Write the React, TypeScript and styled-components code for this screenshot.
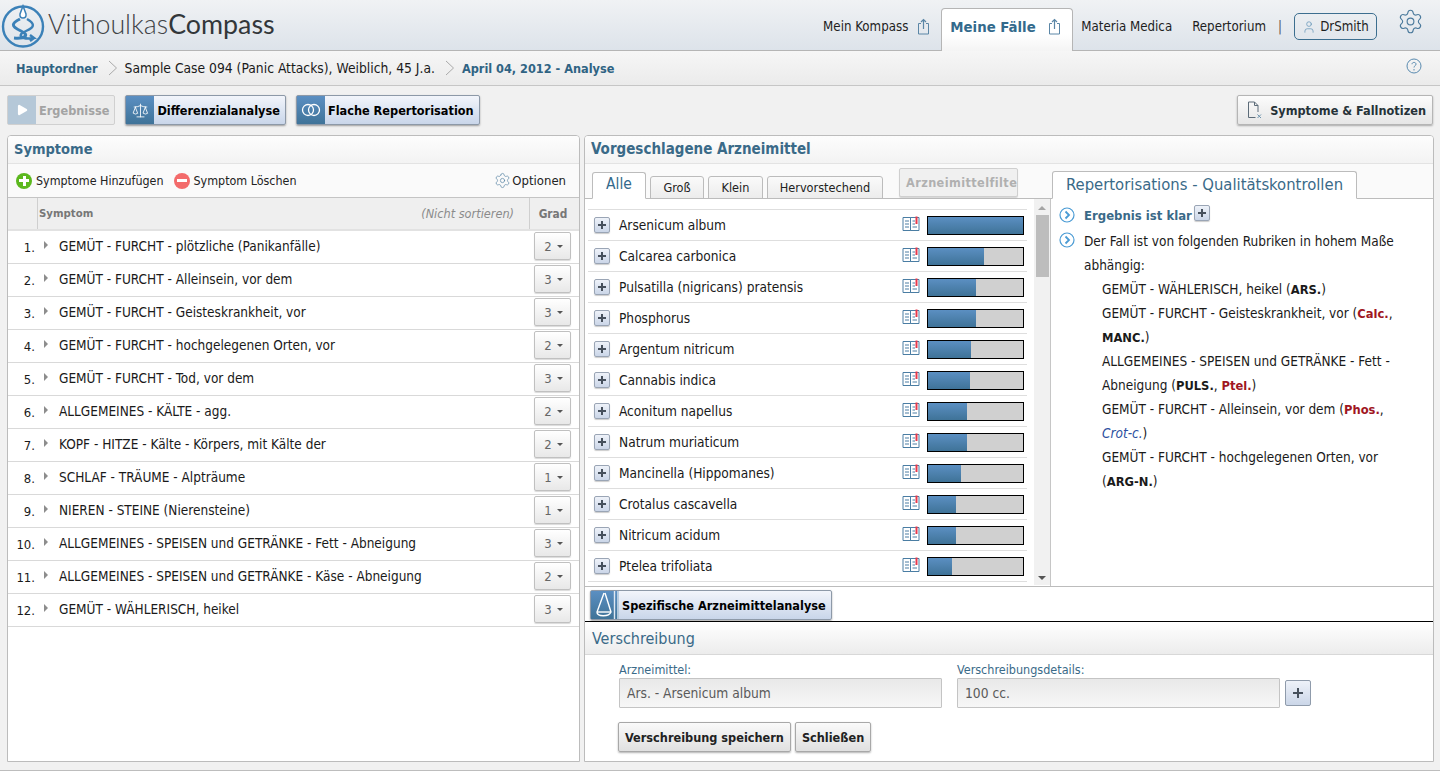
import React from "react";
import styled, { createGlobalStyle } from "styled-components";
import { Settings, Scale, User, Play } from "lucide-react";

const Global = createGlobalStyle`
  html, body { margin: 0; padding: 0; height: 100%; overflow: hidden; }
  body { font-family: "DejaVu Sans", "Noto Sans", sans-serif; font-stretch: condensed; font-size: 13.6px; color: #1a1a1a; background: #f1f1f1; }
  * { box-sizing: border-box; }
`;

const Page = styled.div`width: 1440px; height: 771px; display: flex; flex-direction: column; overflow: hidden; border-bottom: 1px solid #bdbdbd;`;
const Header = styled.header`height: 51px; flex: none; display: flex; align-items: flex-start; justify-content: space-between; padding: 0 16px 0 0; background: linear-gradient(#f0f2f4, #dde3ea); border-bottom: 1px solid #b5b5b5;`;
const Brand = styled.div`display: flex; align-items: center; gap: 2px; height: 50px;`;
const BrandText = styled.div`font-family: "Lato", sans-serif; font-stretch: normal; font-size: 26.8px; font-weight: 300; color: #3f4347; padding-bottom: 2px; b { font-weight: 400; color: #33373a; }`;
const Nav = styled.nav`display: flex; align-items: flex-start; height: 50px; font-size: 13.2px;`;
const NavItem = styled.div<{ $gap?: number }>`display: flex; align-items: center; gap: 9px; height: 50px; padding: 2px 0 0; margin-right: ${p => p.$gap ?? 18}px; color: #1e1e1e; white-space: nowrap;`;
const ActiveTab = styled.div`display: flex; align-items: center; gap: 12px; width: 132px; height: 43px; margin: 8px 8px 0 0; padding: 0 0 8px 8px; background: linear-gradient(#fff 60%, #f4f4f4); border: 1px solid #b5b5b5; border-bottom: 0; border-radius: 4px 4px 0 0; color: #336a8c; font-weight: 700; font-size: 14.8px; white-space: nowrap;`;
const NavSep = styled.span`margin: 0 12px 0 -6px; line-height: 50px; padding-top: 2px; height: 50px; color: #555;`;
const UserBtn = styled.div`display: flex; align-items: center; justify-content: center; gap: 4px; width: 83px; height: 27px; margin-top: 13px; border: 1px solid #3c6e8f; border-radius: 5px; color: #1e1e1e;`;
const Gear = styled.div`margin: 8px 0 0 20px; color: #4b7a9c; line-height: 0;`;

const Crumbs = styled.div`height: 35px; flex: none; display: flex; align-items: center; padding: 0 18px 0 16px; background: linear-gradient(#f6f6f6, #ebebeb); border-bottom: 1px solid #c6c6c6; white-space: nowrap;`;
const CrumbLink = styled.span`color: #2f6383; font-weight: 700; font-size: 12.6px;`;
const CrumbText = styled.span`font-size: 13.75px;`;
const Chevron = styled.span`display: inline-flex; margin: 0 7px 0 10px; color: #aaa; line-height: 0;`;
const Help = styled.span`margin-left: auto; color: #5a8bb0; line-height: 0; position: relative; top: -2px;`;

const Actions = styled.div`height: 49px; flex: none; display: flex; align-items: center; padding: 0 7px 1px 7px; gap: 10px; background: #f1f1f1; font-size: 12.6px;`;
const IconBtn = styled.div<{ $off?: boolean }>`display: flex; align-items: stretch; height: 30px; border: 1px solid ${p => (p.$off ? "#d0d0d0" : "#8d99a8")}; border-radius: 2px; box-shadow: ${p => (p.$off ? "none" : "0 1px 2px rgba(0,0,0,.35)")}; background: ${p => (p.$off ? "#ececec" : "linear-gradient(#f2f5fb, #c9d6ea)")}; font-weight: 700; font-size: 12.6px; color: ${p => (p.$off ? "#a3a3a3" : "#000")}; white-space: nowrap;`;
const BtnIcon = styled.span<{ $off?: boolean }>`width: 28px; display: flex; align-items: center; justify-content: center; color: #fff; background: ${p => (p.$off ? "#b5c8d8" : "linear-gradient(#5b8fc2, #3f7398)")};`;
const BtnText = styled.span`display: flex; align-items: center; padding: 0 5px 0 3px;`;
const PlainBtn = styled.div`display: flex; align-items: center; gap: 8px; margin-left: auto; height: 30px; padding: 0 6px 0 9px; border: 1px solid #b5b5b5; border-radius: 2px; background: linear-gradient(#fcfcfc, #e6e6e6); box-shadow: 0 1px 2px rgba(0,0,0,.3); font-weight: 700; color: #263238; white-space: nowrap;`;

const Main = styled.main`flex: 1; min-height: 0; display: grid; grid-template-columns: 573px 850px; column-gap: 4px; padding: 0 7px 8px 7px;`;
const Panel = styled.section`display: flex; flex-direction: column; min-height: 0; background: #fff; border: 1px solid #bcbcbc; border-radius: 4px 4px 0 0; overflow: hidden;`;
const PanelTitle = styled.h2<{ $size?: number }>`flex: none; height: 28px; margin: 0; padding: 0 6px 2px; display: flex; align-items: center; background: linear-gradient(#fdfdfd, #f3f3f3); border-bottom: 1px solid #e3e3e3; color: #3a6a88; font-size: ${p => p.$size ?? 15}px; font-weight: 700;`;

const SymToolbar = styled.div`flex: none; height: 34px; display: flex; align-items: center; padding: 0 13px 0 8px; gap: 10px; background: #fafafa; border-bottom: 1px solid #c4c4c4; color: #222; font-size: 12.4px;`;
const ToolItem = styled.span`display: inline-flex; align-items: center; gap: 4px; white-space: nowrap;`;
const RoundIcon = styled.span<{ $c: string }>`width: 16px; height: 16px; border-radius: 50%; background: ${p => p.$c}; color: #fff; position: relative; display: inline-block; &::before { content: ""; position: absolute; left: 3px; right: 3px; top: 6.5px; height: 3px; background: #fff; }`;
const RoundPlus = styled(RoundIcon)`&::after { content: ""; position: absolute; top: 3px; bottom: 3px; left: 6.5px; width: 3px; background: #fff; }`;
const OptionItem = styled(ToolItem)`margin-left: auto; gap: 1px; font-size: 13px;`;

const TableHead = styled.div`flex: none; display: grid; grid-template-columns: 29px 1fr 50px; height: 33px; background: #efefef; border-bottom: 2px solid #e2e2e2; color: #777; font-size: 11.3px; font-weight: 700;`;
const HeadCell = styled.div`display: flex; align-items: center; padding: 0 15px 0 1px; border-left: 1px solid #cfcfcf; justify-content: space-between; &:first-child { border-left: 0; }`;
const HeadGrad = styled(HeadCell)`justify-content: center; padding: 0 3px 0 0; font-size: 11.8px;`;
const Hint = styled.i`font-weight: 400; color: #8b8b8b; font-size: 12.6px;`;
const Row = styled.div`flex: none; display: flex; align-items: center; height: 33px; padding: 0 7px 2px 0; border-bottom: 1px solid #d9d9d9; white-space: nowrap; font-size: 13.5px;`;
const RowNum = styled.span`width: 27px; text-align: right; padding-top: 2px; flex: none; font-size: 13px;`;
const Caret = styled.span`flex: none; margin: 0 11px 3px 9px; width: 0; height: 0; border-left: 4px solid #8d8d8d; border-top: 4px solid transparent; border-bottom: 4px solid transparent;`;
const Grade = styled.div`margin-left: auto; display: flex; align-items: center; justify-content: center; gap: 5px; width: 37px; height: 28px; margin-right: 1px; padding-left: 2px; color: #666; font-size: 13px; border: 1px solid #c0c0c0; border-radius: 2px; background: linear-gradient(#fff, #e8e8e8); box-shadow: 0 1px 1px rgba(0,0,0,.15); &::after { content: ""; border-top: 3px solid #555; border-left: 3px solid transparent; border-right: 3px solid transparent; }`;

const TabBar = styled.div`flex: none; height: 35px; display: flex; align-items: flex-end; padding-left: 7px; border-bottom: 1px solid #bcbcbc; background: #fafafa;`;
const Tab = styled.div<{ $w: number; $active?: boolean }>`display: flex; align-items: center; justify-content: center; width: ${p => p.$w}px; height: ${p => (p.$active ? 27 : 23)}px; margin-bottom: -1px; margin-right: 4px; padding-bottom: ${p => (p.$active ? 3 : 0)}px; border: 1px solid #bcbcbc; border-bottom-color: ${p => (p.$active ? "#fff" : "#bcbcbc")}; border-radius: 3px 3px 0 0; background: ${p => (p.$active ? "#fff" : "linear-gradient(#fafafa, #ececec)")}; color: ${p => (p.$active ? "#336a8c" : "#222")}; font-size: ${p => (p.$active ? 15.5 : 12.6)}px; white-space: nowrap;`;
const FilterTab = styled.div`width: 119px; height: 29px; margin: 4px 0 0 12px; align-self: flex-start; overflow: hidden; display: flex; align-items: center; padding-left: 6px; border: 1px solid #cfcfcf; border-radius: 2px; background: #f0f0f0; color: #b0b0b0; font-weight: 700; font-size: 12.6px; letter-spacing: .4px; white-space: nowrap; box-shadow: 0 1px 1px rgba(0,0,0,.15);`;
const RepTab = styled.div`position: absolute; left: 467px; top: 7px; width: 305px; height: 28px; padding-bottom: 1px; display: flex; align-items: center; justify-content: center; background: #fff; border: 1px solid #bcbcbc; border-bottom-color: #fff; border-radius: 3px 3px 0 0; color: #3a6a88; font-size: 16.5px; white-space: nowrap;`;
const TabWrap = styled.div`position: relative; flex: none;`;

const Split = styled.div`flex: none; height: 388px; display: grid; grid-template-columns: 466px 1fr; border-bottom: 1px solid #bcbcbc;`;
const ListCol = styled.div`display: grid; grid-template-columns: 449px 16px; border-right: 1px solid #c6c6c6;`;
const List = styled.div`padding: 10px 7px 0 3px;`;
const Med = styled.div`display: flex; align-items: center; height: 31px; border-top: 1px solid #dedede; &:last-child { border-bottom: 1px solid #dedede; height: 32px; }`;
const PlusBtn = styled.span`flex: none; position: relative; display: inline-block; width: 16px; height: 16px; border: 1px solid #9aa5b5; border-radius: 2px; background: linear-gradient(#eef2f9, #cbd6e8); box-shadow: 0 1px 1px rgba(0,0,0,.2); &::before { content: ""; position: absolute; left: 3px; right: 3px; top: 6px; height: 2px; background: #46505c; } &::after { content: ""; position: absolute; top: 3px; bottom: 3px; left: 6px; width: 2px; background: #46505c; }`;
const MedPlus = styled(PlusBtn)`margin: 0 9px 0 6px;`;
const MedName = styled.span`flex: 1; white-space: nowrap;`;
const BookWrap = styled.span`line-height: 0; margin: -3px 7px 0 0; flex: none;`;
const Bar = styled.div`flex: none; width: 97px; height: 19px; margin-right: 3px; background: #d0d0d0; border: 1px solid #000;`;
const BarFill = styled.div`height: 100%; background: linear-gradient(#5b8fc2, #3f7398);`;
const Scroll = styled.div`background: #f1f1f1; display: flex; flex-direction: column; align-items: center; padding: 7px 0 0; position: relative; margin-bottom: 1px;`;
const ArrowUp = styled.span`border-bottom: 4px solid #a5a5a5; border-left: 4px solid transparent; border-right: 4px solid transparent;`;
const Thumb = styled.div`width: 13px; height: 62px; margin-top: 5px; background: #bdbdbd;`;
const ArrowDown = styled.span`margin-top: auto; margin-bottom: 5px; border-top: 4px solid #555; border-left: 4px solid transparent; border-right: 4px solid transparent;`;

const Quality = styled.div`padding: 5px 17px 0 8px; line-height: 24px; font-size: 13.5px;`;
const QLine = styled.div`display: flex; gap: 9px; align-items: flex-start; & + & { margin-top: 1px; }`;
const QIcon = styled.span`flex: none; line-height: 0; margin-top: 3px; color: #4a9bd4;`;
const QHead = styled.span`color: #3a6a88; font-weight: 700; font-size: 13px; display: inline-flex; align-items: center; gap: 2px;`;
const QPlus = styled(PlusBtn)`margin-top: -6px;`;
const QItem = styled.div`margin-left: 43px;`;
const R = styled.b`color: #a01622; font-size: 12.8px; line-height: 0;`;
const B = styled.b`font-size: 12.8px; line-height: 0;`;
const Cr = styled.i`color: #2c4fa0; line-height: 0;`;

const SpecRow = styled.div`flex: none; height: 35px; padding: 3px 0 0 5px; border-bottom: 1px solid #000;`;
const SpecBtn = styled(IconBtn)`display: inline-flex;`;
const Presc = styled.div`flex: 1; display: flex; flex-direction: column;`;
const PrescTitle = styled(PanelTitle)`height: 33px; padding: 0 6px 0 7px; font-weight: 400; font-size: 16px; background: linear-gradient(#fff, #ececec); border-bottom: 1px solid #d8d8d8;`;
const FormGrid = styled.div`display: grid; grid-template-columns: 323px 323px 26px; column-gap: 15px; padding: 7px 0 0 34px; align-items: end;`;
const Field = styled.label`display: flex; flex-direction: column; color: #3a6a88; font-size: 12.5px; gap: 1px;`;
const Fake = styled.div`height: 30px; display: flex; align-items: center; padding-left: 7px; background: linear-gradient(#e9e9e9, #f7f7f7); border: 1px solid #c4c4c4; border-radius: 1px; color: #5a5a5a; font-size: 13.7px;`;
const AddBtn = styled.div`position: relative; width: 26px; height: 26px; margin: 0 0 2px -10px; border: 1px solid #8f9bab; border-radius: 2px; background: linear-gradient(#eef2f9, #cbd6e8); &::before { content: ""; position: absolute; left: 7px; right: 7px; top: 11px; height: 2px; background: #46505c; } &::after { content: ""; position: absolute; top: 7px; bottom: 7px; left: 11px; width: 2px; background: #46505c; }`;
const FormBtns = styled.div`display: flex; gap: 4px; padding: 14px 0 0 33px;`;
const GrayBtn = styled.div`height: 30px; display: flex; align-items: center; padding: 0 6px; border: 1px solid #a8a8a8; border-radius: 2px; background: linear-gradient(#fafafa, #e0e0e0); box-shadow: 0 1px 2px rgba(0,0,0,.3); color: #222; font-weight: 700; font-size: 12.6px; white-space: nowrap;`;

const Logo = () => (
  <svg width="46" height="46" viewBox="0 0 46 46" fill="none" stroke="#3b81b8">
    <circle cx="23" cy="24.5" r="20" strokeWidth="2.4" />
    <path d="M23 4 L20 12 Q19.5 16 23 16 Q26.5 16 26 12 Z" fill="#fff" strokeWidth="1.5" />
    <path d="M20 17 C12 21 10 24 21 29 C30 33 25 37 14 36" strokeWidth="3" />
    <path d="M27 17 C34 21 36 25 26 29 C16 33 21 38 34 36 L30 33 M34 36 L30 39" strokeWidth="2.4" />
  </svg>
);
const Share = () => (
  <svg width="13" height="17" viewBox="0 0 13 17" fill="none" stroke="#5b86a6" strokeWidth="1">
    <path d="M4 5.5H1.5V16H11.5V5.5H9" />
    <path d="M6.5 11V1.5M4 4L6.5 1.5L9 4" strokeWidth="1.2" />
  </svg>
);
const Book = () => (
  <svg width="18" height="16" viewBox="0 0 18 16" fill="none" stroke="#4a7da3" strokeWidth="1">
    <path d="M1 1.5H8.5V14.5H1ZM8.5 1.5H17V14.5H8.5Z" />
    <path d="M3 5H7M3 8H7M3 11H7M10.5 5H13M10.5 8H13M10.5 11H15" />
    <path d="M14.5 0.5V8" stroke="#e8384a" strokeWidth="2" />
  </svg>
);
const Rings = () => (
  <svg width="20" height="14" viewBox="0 0 20 14" fill="none" stroke="#fff" strokeWidth="1.3"><circle cx="7" cy="7" r="5.5" /><circle cx="13" cy="7" r="5.5" /></svg>
);
const Note = () => (
  <svg width="15" height="18" viewBox="0 0 15 18" fill="none" stroke="#5c6b78" strokeWidth="1">
    <path d="M8.5 16.5H1.5V1H7.5L11 4.5V11M7.5 1V4.5H11" />
    <path d="M10.5 13.5L14 17M14 13.5L10.5 17" stroke="#6d93ad" />
  </svg>
);
const Circle = () => (
  <svg width="16" height="16" viewBox="0 0 16 16" fill="none" stroke="#4a9bd4"><circle cx="8" cy="8" r="7" strokeWidth="1.2" /><path d="M6.5 4.5L10 8L6.5 11.5" strokeWidth="1.8" /></svg>
);
const Cv = () => (
  <svg width="10" height="18" viewBox="0 0 10 18" fill="none" stroke="currentColor"><path d="M1 2L8.5 9L1 16" /></svg>
);
const TallScale = () => (
  <svg width="28" height="30" viewBox="0 0 28 30" fill="none" stroke="#fff" strokeWidth="1.4">
    <path d="M13 3L6 22C6 27 18 27 20 22L14 3" />
    <path d="M6 22H20" />
    <path d="M23.5 1V29M27 1V29" stroke="#dfe8f2" />
  </svg>
);

const symptoms: [string, number][] = [
  ["GEMÜT - FURCHT - plötzliche (Panikanfälle)", 2],
  ["GEMÜT - FURCHT - Alleinsein, vor dem", 3],
  ["GEMÜT - FURCHT - Geisteskrankheit, vor", 3],
  ["GEMÜT - FURCHT - hochgelegenen Orten, vor", 2],
  ["GEMÜT - FURCHT - Tod, vor dem", 3],
  ["ALLGEMEINES - KÄLTE - agg.", 2],
  ["KOPF - HITZE - Kälte - Körpers, mit Kälte der", 2],
  ["SCHLAF - TRÄUME - Alpträume", 1],
  ["NIEREN - STEINE (Nierensteine)", 1],
  ["ALLGEMEINES - SPEISEN und GETRÄNKE - Fett - Abneigung", 3],
  ["ALLGEMEINES - SPEISEN und GETRÄNKE - Käse - Abneigung", 2],
  ["GEMÜT - WÄHLERISCH, heikel", 3],
];
const meds: [string, number][] = [
  ["Arsenicum album", 100],
  ["Calcarea carbonica", 59],
  ["Pulsatilla (nigricans) pratensis", 51],
  ["Phosphorus", 51],
  ["Argentum nitricum", 45],
  ["Cannabis indica", 44],
  ["Aconitum napellus", 41],
  ["Natrum muriaticum", 41],
  ["Mancinella (Hippomanes)", 35],
  ["Crotalus cascavella", 29],
  ["Nitricum acidum", 29],
  ["Ptelea trifoliata", 25],
];

export default function App() {
  return (
    <Page>
      <Global />
      <Header>
        <Brand>
          <Logo />
          <BrandText>Vithoulkas<b>Compass</b></BrandText>
        </Brand>
        <Nav>
          <NavItem $gap={11}>Mein Kompass <Share /></NavItem>
          <ActiveTab>Meine Fälle <Share /></ActiveTab>
          <NavItem $gap={20}>Materia Medica</NavItem>
          <NavItem>Repertorium</NavItem>
          <NavSep>|</NavSep>
          <UserBtn><User size={14} color="#5b8fb5" strokeWidth={1.2} />DrSmith</UserBtn>
          <Gear><Settings size={27} strokeWidth={1} /></Gear>
        </Nav>
      </Header>
      <Crumbs>
        <CrumbLink>Hauptordner</CrumbLink>
        <Chevron><Cv /></Chevron>
        <CrumbText>Sample Case 094 (Panic Attacks), Weiblich, 45 J.a.</CrumbText>
        <Chevron><Cv /></Chevron>
        <CrumbLink>April 04, 2012 - Analyse</CrumbLink>
        <Help>
          <svg width="16" height="16" viewBox="0 0 16 16" fill="none" stroke="currentColor"><circle cx="8" cy="8" r="7" /><path d="M6 6.2C6 3.8 10 3.8 10 6.2C10 7.8 8 7.6 8 9.5M8 11V12.5" /></svg>
        </Help>
      </Crumbs>
      <Actions>
        <IconBtn $off><BtnIcon $off><Play size={14} fill="#fff" strokeWidth={0} /></BtnIcon><BtnText>Ergebnisse</BtnText></IconBtn>
        <IconBtn><BtnIcon><Scale size={17} strokeWidth={1.2} /></BtnIcon><BtnText>Differenzialanalyse</BtnText></IconBtn>
        <IconBtn><BtnIcon><Rings /></BtnIcon><BtnText>Flache Repertorisation</BtnText></IconBtn>
        <PlainBtn><Note />Symptome &amp; Fallnotizen</PlainBtn>
      </Actions>
      <Main>
        <Panel>
          <PanelTitle $size={14.5}>Symptome</PanelTitle>
          <SymToolbar>
            <ToolItem><RoundPlus $c="#5cb81e" />Symptome Hinzufügen</ToolItem>
            <ToolItem><RoundIcon $c="#f36b6b" />Symptom Löschen</ToolItem>
            <OptionItem><Settings size={17} color="#5b86a6" strokeWidth={1} />Optionen</OptionItem>
          </SymToolbar>
          <TableHead>
            <HeadCell />
            <HeadCell>Symptom<Hint>(Nicht sortieren)</Hint></HeadCell>
            <HeadGrad>Grad</HeadGrad>
          </TableHead>
          {symptoms.map(([t, g], i) => (
            <Row key={t}>
              <RowNum>{i + 1}.</RowNum>
              <Caret />
              {t}
              <Grade>{g}</Grade>
            </Row>
          ))}
        </Panel>
        <Panel>
          <PanelTitle>Vorgeschlagene Arzneimittel</PanelTitle>
          <TabWrap>
            <TabBar>
              <Tab $active $w={54}>Alle</Tab>
              <Tab $w={54}>Groß</Tab>
              <Tab $w={55}>Klein</Tab>
              <Tab $w={116}>Hervorstechend</Tab>
              <FilterTab>Arzneimittelfilter</FilterTab>
            </TabBar>
            <RepTab>Repertorisations - Qualitätskontrollen</RepTab>
          </TabWrap>
          <Split>
            <ListCol>
              <List>
                {meds.map(([n, v]) => (
                  <Med key={n}>
                    <MedPlus />
                    <MedName>{n}</MedName>
                    <BookWrap><Book /></BookWrap>
                    <Bar><BarFill style={{ width: `${v}%` }} /></Bar>
                  </Med>
                ))}
              </List>
              <Scroll><ArrowUp /><Thumb /><ArrowDown /></Scroll>
            </ListCol>
            <Quality>
              <QLine><QIcon><Circle /></QIcon><QHead>Ergebnis ist klar <QPlus /></QHead></QLine>
              <QLine><QIcon><Circle /></QIcon><span>Der Fall ist von folgenden Rubriken in hohem Maße abhängig:</span></QLine>
              <QItem>GEMÜT - WÄHLERISCH, heikel (<B>ARS.</B>)</QItem>
              <QItem>GEMÜT - FURCHT - Geisteskrankheit, vor (<R>Calc.</R>, <B>MANC.</B>)</QItem>
              <QItem>ALLGEMEINES - SPEISEN und GETRÄNKE - Fett - Abneigung (<B>PULS.</B>, <R>Ptel.</R>)</QItem>
              <QItem>GEMÜT - FURCHT - Alleinsein, vor dem (<R>Phos.</R>, <Cr>Crot-c.</Cr>)</QItem>
              <QItem>GEMÜT - FURCHT - hochgelegenen Orten, vor (<B>ARG-N.</B>)</QItem>
            </Quality>
          </Split>
          <SpecRow>
            <SpecBtn><BtnIcon><TallScale /></BtnIcon><BtnText>Spezifische Arzneimittelanalyse</BtnText></SpecBtn>
          </SpecRow>
          <Presc>
            <PrescTitle>Verschreibung</PrescTitle>
            <FormGrid>
              <Field>Arzneimittel:<Fake>Ars. - Arsenicum album</Fake></Field>
              <Field>Verschreibungsdetails:<Fake>100 cc.</Fake></Field>
              <AddBtn />
            </FormGrid>
            <FormBtns>
              <GrayBtn>Verschreibung speichern</GrayBtn>
              <GrayBtn>Schließen</GrayBtn>
            </FormBtns>
          </Presc>
        </Panel>
      </Main>
    </Page>
  );
}
